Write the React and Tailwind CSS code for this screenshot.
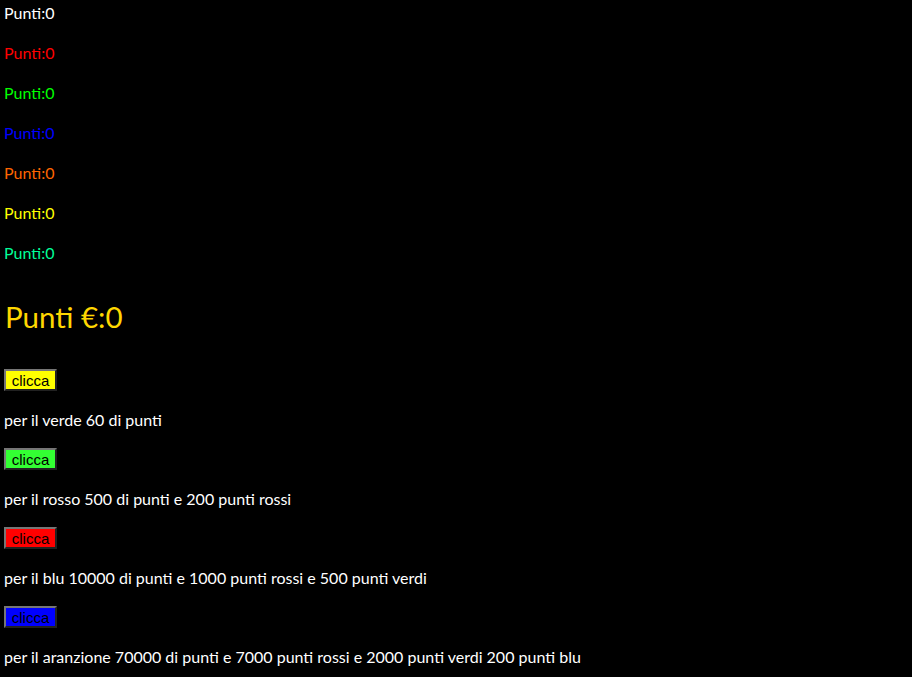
const PUNTI = [
  { color: 'text-white' },
  { color: 'text-[#ff0000]' },
  { color: 'text-[#00ff00]' },
  { color: 'text-[#0000ff]' },
  { color: 'text-[#ff6600]' },
  { color: 'text-[#ffff00]' },
  { color: 'text-[#00ff99]' },
]

const ACQUISTI = [
  { btn: 'bg-[#ffff00]', testo: 'per il verde 60 di punti' },
  { btn: 'bg-[#33ff33]', testo: 'per il rosso 500 di punti e 200 punti rossi' },
  { btn: 'bg-[#ff0000]', testo: 'per il blu 10000 di punti e 1000 punti rossi e 500 punti verdi' },
  { btn: 'bg-[#0000ff]', testo: 'per il aranzione 70000 di punti e 7000 punti rossi e 2000 punti verdi 200 punti blu' },
]

function Bottone({ bg, first }) {
  return (
    <button
      className={`${bg} ${first ? 'mt-[32px]' : 'mt-[15px]'} w-[53px] h-[22px] border-2 border-[#767676] [border-style:outset] text-black text-[15px] leading-none font-['Liberation_Sans',Arial,sans-serif] flex items-center justify-center`}
    >
      clicca
    </button>
  )
}

export default function App() {
  return (
    <div className="min-h-[677px] bg-black pl-1 font-['Lato','Open_Sans',sans-serif]">
      <div className="flex flex-col items-start">
        {PUNTI.map((p, i) => (
          <p key={i} className={`${p.color} text-[16px] h-[26px] leading-[26px] ${i ? 'mt-[14px]' : ''}`}>
            Punti:0
          </p>
        ))}
        <h1 className="text-[#ffd700] text-[29.5px] h-[40px] leading-[40px] mt-[31px] pl-px">Punti €:0</h1>
        {ACQUISTI.map((a, i) => (
          <div key={i} className="flex flex-col items-start">
            <Bottone bg={a.btn} first={i === 0} />
            <p className="text-white text-[16px] h-[26px] leading-[26px] mt-[16px]">{a.testo}</p>
          </div>
        ))}
      </div>
    </div>
  )
}
